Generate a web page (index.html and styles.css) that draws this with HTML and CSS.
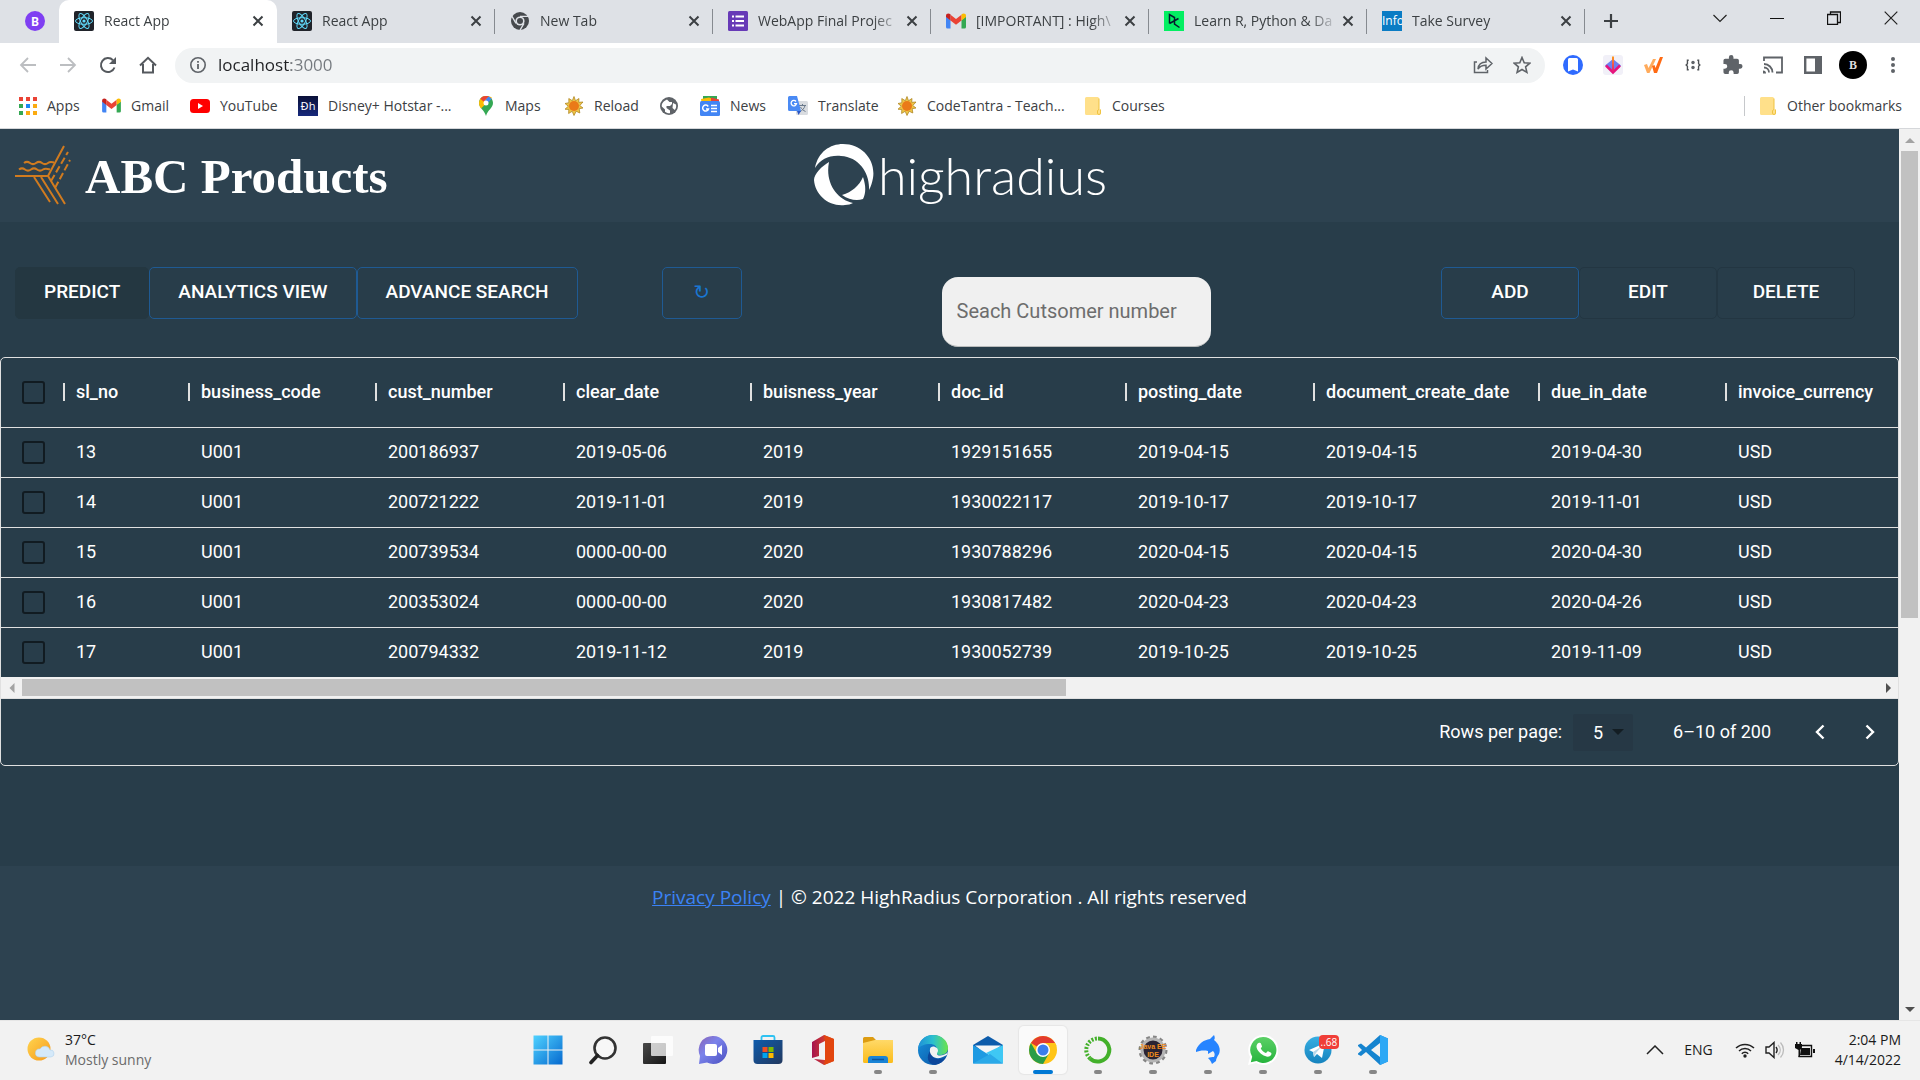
FILE: index.html
```html
<!DOCTYPE html>
<html lang="en">
<head>
<meta charset="utf-8">
<title>React App</title>
<link rel="stylesheet" href="styles.css">
</head>
<body>
<svg class="defs" width="0" height="0" aria-hidden="true">
  <defs>
    <linearGradient id="win" x1="0" y1="0" x2="1" y2="1"><stop offset="0" stop-color="#4fd2ff"/><stop offset="1" stop-color="#0669cf"/></linearGradient>
    <linearGradient id="chat" x1="0" y1="0" x2="1" y2="1"><stop offset="0" stop-color="#8a62b5"/><stop offset=".4" stop-color="#7b83eb"/><stop offset="1" stop-color="#4a4fc0"/></linearGradient>
    <linearGradient id="store" x1="0" y1="0" x2="1" y2="1"><stop offset="0" stop-color="#0f5cad"/><stop offset="1" stop-color="#22385e"/></linearGradient>
    <linearGradient id="folder" x1="0" y1="0" x2="0" y2="1"><stop offset="0" stop-color="#ffd968"/><stop offset="1" stop-color="#fbbc1b"/></linearGradient>
    <linearGradient id="edgeTop" x1="0" y1="0" x2="1" y2="0"><stop offset="0" stop-color="#1f8fd8"/><stop offset=".5" stop-color="#2bc0cf"/><stop offset="1" stop-color="#6be44a"/></linearGradient>
    <linearGradient id="edgeBot" x1="0" y1="0" x2="1" y2="1"><stop offset="0" stop-color="#1793dd"/><stop offset="1" stop-color="#0b4fa0"/></linearGradient>
    <linearGradient id="office" x1="0" y1="0" x2="1" y2="0"><stop offset="0" stop-color="#a5134f"/><stop offset="1" stop-color="#ef5a1a"/></linearGradient>
    <linearGradient id="sun" x1="0" y1="0" x2="1" y2="1"><stop offset="0" stop-color="#ffd44f"/><stop offset="1" stop-color="#f79a1b"/></linearGradient>
    <linearGradient id="tele" x1="0" y1="0" x2="0" y2="1"><stop offset="0" stop-color="#37aee2"/><stop offset="1" stop-color="#1683be"/></linearGradient>
    <linearGradient id="wa" x1="0" y1="0" x2="0" y2="1"><stop offset="0" stop-color="#5bd066"/><stop offset="1" stop-color="#27b43e"/></linearGradient>
    <linearGradient id="task" x1="0" y1="0" x2="1" y2="1"><stop offset="0" stop-color="#4a4a4a"/><stop offset="1" stop-color="#161616"/></linearGradient>
    <linearGradient id="arrowDown" x1="0" y1="0" x2="0" y2="1"><stop offset="0" stop-color="#ff9b1a"/><stop offset="1" stop-color="#e6137e"/></linearGradient>
    <symbol id="i-close" viewBox="0 0 12 12"><path d="M1.500 1.500l9 9M10.500 1.500l-9 9" stroke="#3c4043" stroke-width="2"/></symbol>
    <symbol id="i-react" viewBox="0 0 20 20"><rect width="20" height="20" rx="2" fill="#20232a"/><g fill="none" stroke="#61dafb"><ellipse cx="10" cy="10" rx="8.500" ry="3.300"/><ellipse cx="10" cy="10" rx="8.500" ry="3.300" transform="rotate(60 10 10)"/><ellipse cx="10" cy="10" rx="8.500" ry="3.300" transform="rotate(120 10 10)"/></g><circle cx="10" cy="10" r="1.600" fill="#61dafb"/></symbol>
    <symbol id="i-gmail" viewBox="0 0 20 16"><path d="M0 2v12a1.500 1.500 0 0 0 1.500 1.500H4.500V7L0 3.500z" fill="#4285f4"/><path d="M20 2v12a1.500 1.500 0 0 1-1.500 1.500H15.500V7L20 3.500z" fill="#34a853"/><path d="M4.500 1.800L10 6l5.500-4.200V7.500L10 11.800 4.500 7.500z" fill="#ea4335"/><path d="M0 2.800C0 .6 2.300-.3 4.500 1.300V7.500L0 4z" fill="#c5221f"/><path d="M20 2.800c0-2.200-2.300-3.100-4.500-1.500V7.500L20 4z" fill="#fbbc04"/></symbol>
    <symbol id="i-sunny" viewBox="0 0 20 20"><path d="M10 .5l1.500 4.200L15 2.500l-.3 3.800 4.300-.3-3.200 3.500L19 12l-3.800.7.600 4.300-3.600-1.700L10 19.500l-1.800-4.200L4.600 17.500l.2-4L1 13.200l3.300-3L1 7.500l3.900-.8L4.800 2.500l3.500 2.200z" fill="#edc548" stroke="#a87c16" stroke-width=".7"/><circle cx="10" cy="10" r="5" fill="#ea7a18"/></symbol>
    <symbol id="i-folder" viewBox="0 0 16 18"><path d="M1.500 0h11A1.500 1.500 0 0 1 14 1.500V12l2 1v3a2 2 0 0 1-2 2H1.500A1.500 1.500 0 0 1 0 16.500v-15A1.500 1.500 0 0 1 1.500 0z" fill="#ffe08a"/><path d="M15.500 12.500v3.500a1.500 1.500 0 0 1-3 0v-2.500l1.500-1V1.500" fill="none" stroke="#efc341"/></symbol>
  </defs>
</svg>

<div class="tabs">
  <div class="pinned"><svg width="20" height="20" viewBox="0 0 20 20"><circle cx="10" cy="10" r="10" fill="#7f3ff2"/><text x="10" y="14.500" text-anchor="middle" class="pin-letter">B</text></svg></div>
  <div class="tab active"><svg width="20" height="20"><use href="#i-react"/></svg><span class="tab-title">React App</span><button class="tab-close" aria-label="Close tab"><svg width="12" height="12"><use href="#i-close"/></svg></button></div>
  <div class="tab"><svg width="20" height="20"><use href="#i-react"/></svg><span class="tab-title">React App</span><button class="tab-close" aria-label="Close tab"><svg width="12" height="12"><use href="#i-close"/></svg></button></div>
  <div class="tab"><svg width="20" height="20" viewBox="0 0 20 20"><circle cx="10" cy="10" r="9" fill="#46494d"/><circle cx="10" cy="10" r="4.600" fill="#dee1e6"/><circle cx="10" cy="10" r="3" fill="#46494d"/><path d="M10 5.400h8M6 12.300L2 5.400M14 12.300L10 19.200" stroke="#dee1e6" stroke-width="1.300"/></svg><span class="tab-title">New Tab</span><button class="tab-close" aria-label="Close tab"><svg width="12" height="12"><use href="#i-close"/></svg></button></div>
  <div class="tab"><svg width="20" height="20" viewBox="0 0 20 20"><rect width="20" height="20" rx="1.500" fill="#673ab7"/><path d="M4 5.500h2M4 10h2M4 14.500h2M7.500 5.500H16M7.500 10H16M7.500 14.500H16" stroke="#fff" stroke-width="2"/></svg><span class="tab-title">WebApp Final Projec</span><button class="tab-close" aria-label="Close tab"><svg width="12" height="12"><use href="#i-close"/></svg></button></div>
  <div class="tab"><svg width="20" height="16"><use href="#i-gmail"/></svg><span class="tab-title">[IMPORTANT] : High\</span><button class="tab-close" aria-label="Close tab"><svg width="12" height="12"><use href="#i-close"/></svg></button></div>
  <div class="tab"><svg width="20" height="20" viewBox="0 0 20 20"><rect width="20" height="20" fill="#03ef62"/><path d="M5.500 12.500V3.500l5 3v6.500l5 3.500M14.500 7.500l-9 5" fill="none" stroke="#05192d" stroke-width="1.500"/></svg><span class="tab-title">Learn R, Python &amp; Da</span><button class="tab-close" aria-label="Close tab"><svg width="12" height="12"><use href="#i-close"/></svg></button></div>
  <div class="tab"><span class="info-icon">Info</span><span class="tab-title">Take Survey</span><button class="tab-close" aria-label="Close tab"><svg width="12" height="12"><use href="#i-close"/></svg></button></div>
  <button class="new-tab" aria-label="New tab"><svg width="16" height="16" viewBox="0 0 16 16"><path d="M8 1v14M1 8h14" stroke="#3c4043" stroke-width="2.200"/></svg></button>
  <div class="window-controls">
    <button aria-label="Search tabs"><svg width="14" height="14" viewBox="0 0 14 14"><path d="M.5 4l6.500 6.500L13.500 4" fill="none" stroke="#222" stroke-width="1.200"/></svg></button>
    <button aria-label="Minimize"><svg width="14" height="14" viewBox="0 0 14 14"><path d="M0 7.500h14" stroke="#111"/></svg></button>
    <button aria-label="Restore"><svg width="14" height="14" viewBox="0 0 14 14"><path d="M.5 3.500h10v10H.5zM3.500 3V1h10v10.500h-2.500" fill="none" stroke="#111" stroke-width="1.300"/></svg></button>
    <button aria-label="Close window"><svg width="14" height="14" viewBox="0 0 14 14"><path d="M.7.7l12.600 12.600M13.300.7L.7 13.300" stroke="#222" stroke-width="1.200"/></svg></button>
  </div>
</div>

<div class="toolbar">
  <div class="nav">
    <button aria-label="Back"><svg width="18" height="18" viewBox="0 0 18 18"><path d="M17 9H2M9 2L2 9l7 7" fill="none" stroke="#bcbec1" stroke-width="1.800"/></svg></button>
    <button aria-label="Forward"><svg width="18" height="18" viewBox="0 0 18 18"><path d="M1 9h15M9 2l7 7-7 7" fill="none" stroke="#bcbec1" stroke-width="1.800"/></svg></button>
    <button aria-label="Reload"><svg width="18" height="18" viewBox="0 0 18 18"><path d="M15.500 11.500A7 7 0 1 1 14 4.200" fill="none" stroke="#55595e" stroke-width="2"/><path d="M17 1v7h-7z" fill="#55595e"/></svg></button>
    <button aria-label="Home"><svg width="18" height="18" viewBox="0 0 18 18"><path d="M1 9.500L9 1.800l8 7.700M4 8v8.500h10V8" fill="none" stroke="#55595e" stroke-width="2"/></svg></button>
  </div>
  <div class="omnibox">
    <svg width="16" height="16" viewBox="0 0 16 16"><circle cx="8" cy="8" r="7.200" fill="none" stroke="#5f6368" stroke-width="1.600"/><path d="M8 7v5M8 4v1.800" stroke="#5f6368" stroke-width="1.800"/></svg>
    <input class="url" type="text" value="localhost:3000" aria-label="Address">
    <button aria-label="Share"><svg width="20" height="20" viewBox="0 0 20 20"><path d="M4 7H1.500v10.500h13V15M5 14c.5-5 3.500-7 8-7V3l6 5.500-6 5.500v-3.800c-4 0-6 .8-8 3.800z" fill="none" stroke="#5f6368" stroke-width="1.500"/></svg></button>
    <button aria-label="Bookmark"><svg width="18" height="18" viewBox="0 0 18 18"><path d="M9 1.500l2.200 5.200 5.600.5-4.200 3.700 1.300 5.500L9 13.500l-4.900 2.900 1.300-5.500L1.200 7.200l5.600-.5z" fill="none" stroke="#5f6368" stroke-width="1.600"/></svg></button>
  </div>
  <div class="extensions">
    <button aria-label="Extension"><svg width="20" height="20" viewBox="0 0 20 20"><circle cx="10" cy="10" r="10" fill="#2f6bff"/><path d="M5 4.500A1.500 1.500 0 0 1 6.500 3h7A1.500 1.500 0 0 1 15 4.500V16.500l-5-2-5 2z" fill="#fff"/></svg></button>
    <button aria-label="Downloader"><svg width="20" height="20" viewBox="0 0 20 20"><rect width="20" height="20" rx="3" fill="#f1f0f8"/><path d="M10 4L2 10.500l8 8 8-8z" fill="#6f80ef"/><path d="M3 10.500l7 7 7-7" fill="none" stroke="#e6137e" stroke-width="2.500"/><path d="M9 1.500h2V17H9z" fill="url(#arrowDown)"/></svg></button>
    <button aria-label="Checker"><svg width="20" height="18" viewBox="0 0 20 18"><path d="M1 9l3-1 1.500 4L10 3h3L6.500 17H4z" fill="#ffab5c"/><path d="M9 10l2.500-1 1 3L17 1h3l-6 16h-3z" fill="#ff6a13"/></svg></button>
    <button aria-label="JSON viewer"><svg width="18" height="12" viewBox="0 0 18 14"><path d="M4 1.500H2.500v4L1 7l1.500 1.500v4H4M14 1.500h1.500v4L17 7l-1.500 1.500v4H14" fill="none" stroke="#4d5154" stroke-width="1.600"/><circle cx="9" cy="4" r="2" fill="#5f6368"/><circle cx="9" cy="10" r="2" fill="#5f6368"/></svg></button>
    <button aria-label="Extensions"><svg width="20" height="20" viewBox="0 0 22 22"><path d="M19 10h-1.500V6a2 2 0 0 0-2-2h-4V2.500a2.500 2.500 0 0 0-5 0V4h-4A2 2 0 0 0 .5 6v3.800H2a2.700 2.700 0 0 1 0 5.400H.5V19a2 2 0 0 0 2 2h3.800v-1.500a2.700 2.700 0 0 1 5.400 0V21h3.800a2 2 0 0 0 2-2v-4H19a2.500 2.500 0 0 0 0-5z" fill="#5f6368"/></svg></button>
    <button aria-label="Cast"><svg width="20" height="18" viewBox="0 0 20 18"><path d="M1 5V1.500h18v15h-6M1 8a8.500 8.500 0 0 1 8.500 8.500M1 11.500a5 5 0 0 1 5 5" fill="none" stroke="#5f6368" stroke-width="1.800"/><path d="M0 14.500a3 3 0 0 1 3 3H0z" fill="#5f6368"/></svg></button>
    <button aria-label="Side panel"><svg width="18" height="18" viewBox="0 0 18 18"><path d="M1.200 1.200h15.600v15.600H1.200z" fill="none" stroke="#5f6368" stroke-width="2.400"/><path d="M11 1h6v16h-6z" fill="#5f6368"/></svg></button>
    <button class="avatar" aria-label="Profile">B</button>
    <button aria-label="Menu"><svg width="4" height="16" viewBox="0 0 4 16"><g fill="#5f6368"><circle cx="2" cy="2" r="2"/><circle cx="2" cy="8" r="2"/><circle cx="2" cy="14" r="2"/></g></svg></button>
  </div>
</div>

<nav class="bookmarks">
  <a href="#"><svg width="18" height="18" viewBox="0 0 18 18"><path d="M0 0h4v4H0zM7 0h4v4H7zM14 0h4v4h-4z" fill="#ea4335"/><path d="M0 7h4v4H0zM0 14h4v4H0z" fill="#34a853"/><path d="M7 7h4v4H7z" fill="#1a87f4"/><path d="M14 7h4v4h-4zM14 14h4v4h-4zM7 14h4v4H7z" fill="#fbab10"/></svg><span>Apps</span></a>
  <a href="#"><svg width="19" height="15"><use href="#i-gmail"/></svg><span>Gmail</span></a>
  <a href="#"><svg width="20" height="14" viewBox="0 0 20 14"><rect width="20" height="14" rx="3.500" fill="#f00"/><path d="M8 4l5 3-5 3z" fill="#fff"/></svg><span>YouTube</span></a>
  <a href="#"><span class="hotstar">Ɖh</span><span>Disney+ Hotstar -...</span></a>
  <a href="#"><svg width="18" height="20" viewBox="0 0 16 20"><path d="M8 0C3.500 0 1 3.400 1 7c0 5 5.500 7 7 13C9.500 14 15 12 15 7c0-3.600-2.500-7-7-7z" fill="#34a853"/><path d="M3 12.500L14 1.800C12.500.6 10.500 0 8 0 4 0 1 3.400 1 7c0 2.200.9 4 2 5.500z" fill="#fbbc04"/><path d="M2.300 2.800L5.500 5.500 11 .5C6.500-.8 3.700.8 2.300 2.800z" fill="#ea4335"/><path d="M10.500.4L6 5.500 9 8l4.600-5.300C12.800 1.600 11.700.8 10.500.4z" fill="#4285f4"/><circle cx="8" cy="7" r="2.500" fill="#fff"/></svg><span>Maps</span></a>
  <a href="#"><svg width="20" height="20"><use href="#i-sunny"/></svg><span>Reload</span></a>
  <a href="#" aria-label="Website"><svg width="18" height="18" viewBox="0 0 18 18"><circle cx="9" cy="9" r="9" fill="#5f6368"/><path d="M7 2.500C3 4 1.500 7 1.800 9.500L5 12.500v2.300c1 1 3 1.700 5 1.500v-2.800L6.500 11V9H10l2-2V5H9.500zM13 6l3 1.500c.5 2 0 4-1.200 5.500L12.500 11z" fill="#fff"/></svg></a>
  <a href="#"><svg width="20" height="20" viewBox="0 0 20 20"><path d="M3 0h14v6H3z" fill="#34a853"/><path d="M1 3l8-1.500L18 5v4H2z" fill="#fbbc04"/><path d="M11 1.500l8 2V9h-8z" fill="#ea4335"/><rect y="5" width="20" height="15" rx="1.500" fill="#4285f4"/><path d="M8.200 10.500A3 3 0 1 0 8.500 13H6M11 9.500h6M11 12.500h6M11 15.500h6" fill="none" stroke="#fff" stroke-width="1.500"/></svg><span>News</span></a>
  <a href="#"><svg width="20" height="20" viewBox="0 0 20 20"><rect x="8" y="5" width="12" height="14" rx="1.500" fill="#d9dce0"/><path d="M11 9.500h7M14.500 8v1.500M17 9.500c-.5 3-3 5-5 6M12.500 11c1 2 3 3.500 5 4.500" fill="none" stroke="#6b7a8c"/><path d="M1.500 0H9l4 15H1.500A1.500 1.500 0 0 1 0 13.500v-12A1.500 1.500 0 0 1 1.500 0z" fill="#4a8af4"/><path d="M9 15h4l-2.500 4z" fill="#2a56c6"/><path d="M8 5.500A2.700 2.700 0 1 0 8.500 7.700H6" fill="none" stroke="#fff" stroke-width="1.300"/></svg><span>Translate</span></a>
  <a href="#"><svg width="20" height="20"><use href="#i-sunny"/></svg><span>CodeTantra - Teach...</span></a>
  <a href="#"><svg width="18" height="18"><use href="#i-folder"/></svg><span>Courses</span></a>
  <a class="other" href="#"><svg width="18" height="18"><use href="#i-folder"/></svg><span>Other bookmarks</span></a>
</nav>

<div class="viewport">
  <div class="page">
    <header class="header">
      <div class="brand">
        <svg width="56" height="60" viewBox="0 0 56 60"><g fill="none" stroke="#d17b1f" stroke-width="2"><path d="M0 31h33L49 1"/><path d="M4 24.500c2-1.500 4-1.500 6 0s4 1.500 6 0 4-1.500 6 0 4 1.500 6 0 4-1 7 0M9 18c2-1.500 4-1.500 6 0s4 1.500 6 0 4-1.500 6 0 4 1.500 6 0 3-1 6-.5"/><path d="M36 36L53 7M40 43L55 15" stroke-dasharray="7 3"/><path d="M19 32l16 25M26 32l17 27M33 31l17 28"/></g></svg>
        <h1>ABC Products</h1>
      </div>
      <div class="logo">
        <svg width="60" height="62" viewBox="0 0 60 62"><path d="M1 24C4 8 16 0 29 0c19 0 33 16 30 34-1 5-2 8-4 12 1-17-10-33-28-34C15 11 7 15 1 24z" fill="#fff"/><path d="M15 18C8 22 0 30 0 36c1 15 15 27 31 25 3 0 6-1 8-2C22 55 11 38 15 18z" fill="#fff"/><path d="M49 33c3 9 3 16 0 22-6 2-14 1-21-4 10-3 17-9 21-18z" fill="#fff"/></svg>
        <span>highradius</span>
      </div>
    </header>

    <main class="main">
      <div class="actions">
        <div class="group">
          <button class="btn filled">PREDICT</button>
          <button class="btn">ANALYTICS VIEW</button>
          <button class="btn">ADVANCE SEARCH</button>
        </div>
        <button class="btn refresh">↻</button>
        <input class="search" type="text" placeholder="Seach Cutsomer number" aria-label="Customer number">
        <div class="group equal">
          <button class="btn">ADD</button>
          <button class="btn muted">EDIT</button>
          <button class="btn muted">DELETE</button>
        </div>
      </div>

      <section class="grid">
        <table>
          <colgroup><col class="c-check"><col class="c-no"><col class="c-odd"><col class="c-even"><col class="c-odd"><col class="c-even"><col class="c-odd"><col class="c-even"><col class="c-wide"><col class="c-odd"><col></colgroup>
          <thead><tr><th><input type="checkbox" aria-label="Select all"></th><th><span>sl_no</span></th><th><span>business_code</span></th><th><span>cust_number</span></th><th><span>clear_date</span></th><th><span>buisness_year</span></th><th><span>doc_id</span></th><th><span>posting_date</span></th><th><span>document_create_date</span></th><th><span>due_in_date</span></th><th><span>invoice_currency</span></th></tr></thead>
          <tbody>
            <tr><td><input type="checkbox" aria-label="Select 13"></td><td>13</td><td>U001</td><td>200186937</td><td>2019-05-06</td><td>2019</td><td>1929151655</td><td>2019-04-15</td><td>2019-04-15</td><td>2019-04-30</td><td>USD</td></tr>
            <tr><td><input type="checkbox" aria-label="Select 14"></td><td>14</td><td>U001</td><td>200721222</td><td>2019-11-01</td><td>2019</td><td>1930022117</td><td>2019-10-17</td><td>2019-10-17</td><td>2019-11-01</td><td>USD</td></tr>
            <tr><td><input type="checkbox" aria-label="Select 15"></td><td>15</td><td>U001</td><td>200739534</td><td>0000-00-00</td><td>2020</td><td>1930788296</td><td>2020-04-15</td><td>2020-04-15</td><td>2020-04-30</td><td>USD</td></tr>
            <tr><td><input type="checkbox" aria-label="Select 16"></td><td>16</td><td>U001</td><td>200353024</td><td>0000-00-00</td><td>2020</td><td>1930817482</td><td>2020-04-23</td><td>2020-04-23</td><td>2020-04-26</td><td>USD</td></tr>
            <tr><td><input type="checkbox" aria-label="Select 17"></td><td>17</td><td>U001</td><td>200794332</td><td>2019-11-12</td><td>2019</td><td>1930052739</td><td>2019-10-25</td><td>2019-10-25</td><td>2019-11-09</td><td>USD</td></tr>
          </tbody>
        </table>
        <div class="hscroll">
          <svg width="21" height="12" viewBox="0 0 20 12"><path d="M13 1v10L8 6z" fill="#a3a3a3"/></svg>
          <div class="hthumb"></div>
          <div class="hrest"></div>
          <svg width="20" height="12" viewBox="0 0 20 12"><path d="M8 1v10l5-5z" fill="#505050"/></svg>
        </div>
        <div class="pager">
          <label for="rows">Rows per page:</label>
          <div class="select-wrap">
            <select id="rows"><option>5</option><option>10</option></select>
            <svg width="12" height="6" viewBox="0 0 12 6"><path d="M0 0h12L6 6z" fill="#131d23"/></svg>
          </div>
          <span class="range">6–10 of 200</span>
          <button aria-label="Previous page"><svg width="10" height="16" viewBox="0 0 10 16"><path d="M8.500 1.500L2 8l6.500 6.500" fill="none" stroke="#fff" stroke-width="2.400"/></svg></button>
          <button aria-label="Next page"><svg width="10" height="16" viewBox="0 0 10 16"><path d="M1.500 1.500L8 8l-6.500 6.500" fill="none" stroke="#fff" stroke-width="2.400"/></svg></button>
        </div>
      </section>
    </main>

    <footer class="footer"><a href="#">Privacy Policy</a> | © 2022 HighRadius Corporation . All rights reserved</footer>
  </div>
  <div class="vscroll">
    <svg width="12" height="20" viewBox="0 0 12 20"><path d="M1 14h10L6 9z" fill="#a3a3a3"/></svg>
    <div class="vtrack"><div class="vthumb"></div></div>
    <svg width="12" height="20" viewBox="0 0 12 20"><path d="M1 7h10l-5 5z" fill="#505050"/></svg>
  </div>
</div>

<div class="taskbar">
  <div class="weather">
    <svg width="28" height="26" viewBox="0 0 28 26"><circle cx="12" cy="12" r="11.500" fill="url(#sun)"/><path d="M12 20a4 4 0 0 1 1-8 5.500 5.500 0 0 1 10 1 3.500 3.500 0 0 1 1 7z" fill="#d5e9f9" stroke="#b4d3ec" stroke-width=".6"/></svg>
    <div><div>37°C</div><div class="dim">Mostly sunny</div></div>
  </div>
  <div class="apps">
    <button aria-label="Start"><svg width="30" height="30" viewBox="0 0 30 30"><path d="M.5.500h14v14H.5zM15.500.5h14v14h-14zM.5 15.500h14v14H.5zM15.500 15.500h14v14h-14z" fill="url(#win)"/></svg></button>
    <button aria-label="Search"><svg width="30" height="30" viewBox="0 0 30 30"><circle cx="17" cy="13" r="10.500" fill="#f7f7f7" stroke="#333" stroke-width="2.600"/><path d="M9.500 20.500L3 27.500" stroke="#222" stroke-width="3.600" stroke-linecap="round"/></svg></button>
    <button aria-label="Task view"><svg width="30" height="30" viewBox="0 0 30 30"><rect y="8" width="23" height="21" rx="1" fill="url(#task)"/><rect x="8" y="1" width="22" height="20" rx="1" fill="#fff" opacity=".75"/></svg></button>
    <button aria-label="Chat"><svg width="30" height="30" viewBox="0 0 30 30"><path d="M15 1a14 14 0 1 1-6 26.500L1 29l1-8A14 14 0 0 1 15 1z" fill="url(#chat)"/><rect x="7" y="9" width="12" height="12" rx="2" fill="#fff"/><path d="M20 13l4-3v10l-4-3z" fill="#fff"/></svg></button>
    <button aria-label="Store"><svg width="30" height="30" viewBox="0 0 30 30"><path d="M8.500 6V2.500A1.500 1.500 0 0 1 10 1h10a1.500 1.500 0 0 1 1.500 1.500V6" fill="none" stroke="#2ec2f2" stroke-width="1.800"/><path d="M.5 5h29v20a4 4 0 0 1-4 4h-21a4 4 0 0 1-4-4z" fill="url(#store)"/><path d="M9.500 12h5v5h-5z" fill="#f25022"/><path d="M15.500 12h5v5h-5z" fill="#7fba00"/><path d="M9.500 18h5v5h-5z" fill="#00a4ef"/><path d="M15.500 18h5v5h-5z" fill="#ffb900"/></svg></button>
    <button aria-label="Office"><svg width="30" height="30" viewBox="0 0 30 30"><path d="M16 0l10 4v22l-10 4-10-6 11 1V6l-6 3v12l-7 2V7z" fill="url(#office)"/><path d="M16 0l10 4v22l-10 4 1-5V6z" fill="#e2460f"/></svg></button>
    <button class="running" aria-label="Files"><svg width="30" height="30" viewBox="0 0 30 30"><path d="M0 3.500A1.500 1.500 0 0 1 1.500 2H10l3 3H30v5H0z" fill="#dd9c12"/><path d="M0 8l12-3h18v21.500A1.500 1.500 0 0 1 28.500 28h-27A1.500 1.500 0 0 1 0 26.500z" fill="url(#folder)"/><path d="M5 28v-4a3 3 0 0 1 3-3h14a3 3 0 0 1 3 3v4z" fill="#1a84d6"/><path d="M9 24.500h12" stroke="#0d559c" stroke-width="1.500"/></svg></button>
    <button class="running" aria-label="Edge"><svg width="30" height="30" viewBox="0 0 30 30"><circle cx="15" cy="15" r="15" fill="url(#edgeBot)"/><path d="M0 14C1 5 7 0 15 0c9 0 15 6 15 13 0 5-4 7-8 7-5 0-4-3-3-5 0-4-3-6-7-6-6 0-10 2-12 5z" fill="url(#edgeTop)"/><path d="M13 15c-1 5 3 10 9 9 3 0 5-1 6-2-2 4-6 7-11 8C10 29 7 22 13 15z" fill="#0c479b"/><path d="M12 14c-1 6 4 10 10 9 3-1 5-2 7-3l1-3c-3 4-12 5-11 1 2-2 1-5-2-6-2-1-5 0-5 2z" fill="#f2f2f2"/></svg></button>
    <button aria-label="Mail"><svg width="30" height="28" viewBox="0 0 30 28"><path d="M0 9L15 0l15 9v5H0z" fill="#0d5cab"/><path d="M2 9.500h26L15 20z" fill="#f5f6f7"/><path d="M0 9l30 18.500H0z" fill="#1e9ae2"/><path d="M30 9v18.500L13 17z" fill="#3fc8f4"/><path d="M0 27.500L17 18l13 9.500z" fill="#2aa9e8"/></svg></button>
    <button class="current" aria-label="Chrome"><svg width="30" height="30" viewBox="0 0 30 30"><circle cx="15" cy="15" r="14" fill="#ffc517"/><path d="M15 15L2.900 8A14 14 0 0 1 27.100 8z" fill="#e33b2e"/><path d="M27.100 8H15v3h13.400z" fill="#ffc517"/><path d="M2.900 8A14 14 0 0 0 15 29l6-10.500H9z" fill="#2a9d48"/><circle cx="15" cy="15" r="7" fill="#fff"/><circle cx="15" cy="15" r="5.500" fill="#3b7ded"/></svg></button>
    <button class="running" aria-label="Anaconda"><svg width="30" height="30" viewBox="0 0 30 30"><path d="M15 3.500a11.500 11.500 0 1 1-8 20" fill="none" stroke="#43b02a" stroke-width="4"/><path d="M7 23.500a11.500 11.500 0 0 1 8-20" fill="none" stroke="#43b02a" stroke-width="4" stroke-dasharray="2 1.500"/></svg></button>
    <button class="running" aria-label="Java EE IDE"><svg width="32" height="30" viewBox="0 0 32 30"><circle cx="16" cy="15" r="12.500" fill="none" stroke="#858585" stroke-width="4" stroke-dasharray="3.500 3"/><circle cx="16" cy="15" r="11" fill="#2a2333" stroke="#b5b5b5" stroke-width="3"/><text class="java" x="16" y="14" text-anchor="middle">Java EE</text><text class="java" x="16" y="22" text-anchor="middle">IDE</text></svg></button>
    <button class="running" aria-label="Dolphin"><svg width="30" height="30" viewBox="0 0 30 30"><path d="M3 15C6 8 11 5 17 4l4-4c1 2 1 4 0 5 5 4 7 9 5 14-2 3-3 5-3 7l-4 3c-1-3-3-5-4-6 2-1 4-1 6-1 1-2 1-4-1-6l-5 3v-3c-5-1-9 0-12 1z" fill="#2684ff"/></svg></button>
    <button class="running" aria-label="WhatsApp"><svg width="30" height="30" viewBox="0 0 30 30"><path d="M15 0a15 15 0 1 1-7 28L0 30l2-8A15 15 0 0 1 15 0z" fill="#fff"/><path d="M15 2a13 13 0 1 1-6.500 24L2.800 27.300l1.400-5.500A13 13 0 0 1 15 2z" fill="url(#wa)"/><path d="M10.500 8c1-.6 2-.4 2.300.3l1.200 2.900c.2.800-1.500 1.800-1.200 2.400 1.100 2.200 2.900 3.600 5 4.400.7.200 1.500-2 2.300-1.700l3 1.500c.8.800.1 2.400-1 3.200-2 1.200-4.800.7-8-1.500-3-2.100-5.600-5.300-5.600-8 0-1.600.8-2.800 2-3.500z" fill="#fff"/></svg></button>
    <button class="running" aria-label="Telegram"><svg width="30" height="30" viewBox="0 0 30 30"><circle cx="15" cy="15" r="13.500" fill="url(#tele)"/><path d="M6 15l16-7-3 15-5-4-3 3-1-5z" fill="#fff"/><path d="M10 17l9-6-6 7-2 4z" fill="#b9d8ea"/></svg><span class="badge">..68</span></button>
    <button class="running" aria-label="VS Code"><svg width="30" height="30" viewBox="0 0 30 30"><path d="M22 0l8 3.500v23L22 30 8 17l-5 4-3-1.500v-1L4 15 0 11v-1l3-1.500 5 4zM22 8l-9 7 9 7z" fill="#1684cf" fill-rule="evenodd"/><path d="M22 0l8 3.500v23L22 30z" fill="#2ea8f5"/></svg></button>
  </div>
  <div class="tray">
    <svg width="18" height="10" viewBox="0 0 18 10"><path d="M1 9l8-8 8 8" fill="none" stroke="#222" stroke-width="1.500"/></svg>
    <span class="lang">ENG</span>
    <svg width="20" height="16" viewBox="0 0 20 16"><g fill="none" stroke="#222" stroke-width="1.500"><path d="M1 6a13 13 0 0 1 18 0M4 9a8.500 8.500 0 0 1 12 0M6.800 11.700a4.500 4.500 0 0 1 6.400 0"/></g><circle cx="10" cy="14" r="1.700" fill="#222"/></svg>
    <svg width="20" height="18" viewBox="0 0 20 18"><path d="M1 6h3l5-4.500v15L4 12H1zM11 6c1.500 2 1.500 4 0 6" fill="none" stroke="#222" stroke-width="1.400"/><path d="M13 4c3 3 3 7 0 10M15.500 1.500c4 4.500 4 10.500 0 15" fill="none" stroke="#bbb" stroke-width="1.300"/></svg>
    <svg width="20" height="16" viewBox="0 0 20 16"><path d="M7 3.500h9.500v11H3.500" fill="none" stroke="#111" stroke-width="1.400"/><path d="M6 6h9v7H5zM18 7h2v4h-2zM0 2h7v3.500L5 8v7H3.500V8L0 6zM1 0h1.500v3H1zM4.500 0H6v3H4.500z" fill="#111"/></svg>
    <div class="clock"><div>2:04 PM</div><div>4/14/2022</div></div>
  </div>
</div>
</body>
</html>
```
FILE: styles.css
```css
* { box-sizing: border-box; }
body { margin: 0; min-height: 100vh; display: flex; flex-direction: column; background: #fff; color: #3c4043; font: 14px/20px "Open Sans", "Noto Sans", sans-serif; }
button { border: 0; padding: 0; background: none; font: inherit; color: inherit; display: flex; align-items: center; justify-content: center; }
svg { display: block; flex: none; }
.defs { position: absolute; }
a { color: inherit; text-decoration: none; }

/* Tab strip */
.tabs { display: flex; height: 43px; padding-bottom: 1px; background: #dee1e6; }
.pinned { flex: none; width: 59px; display: flex; align-items: center; padding-left: 25px; }
.pin-letter { font: 700 12px Roboto, sans-serif; fill: #fff; }
.tab { flex: 0 1 218px; min-width: 0; height: 43px; display: flex; align-items: center; padding: 0 13px 1px 15px; position: relative; }
.tab + .tab:not(.active)::after { content: ""; position: absolute; right: 0; top: 9px; width: 1px; height: 25px; background: #868a90; }
.tab.active { background: #fff; border-radius: 10px 10px 0 0; }
.tab-title { flex: 1; min-width: 0; margin: 0 4px 0 10px; overflow: hidden; white-space: nowrap; -webkit-mask-image: linear-gradient(to right, #000 115px, transparent 145px); mask-image: linear-gradient(to right, #000 115px, transparent 145px); }
.info-icon { width: 20px; height: 20px; overflow: hidden; background: #0a7cc4; color: #fff; font-size: 12px; line-height: 20px; }
.new-tab { width: 52px; }
.window-controls { margin-left: auto; display: flex; align-items: flex-start; padding-right: 1px; }
.window-controls button { width: 57px; height: 36px; }

/* Address row */
.toolbar { display: flex; align-items: center; height: 44px; padding: 0 7px 0 8px; }
.nav { display: flex; width: 167px; flex: none; }
.nav button { width: 40px; height: 34px; }
.omnibox { flex: 1; display: flex; align-items: center; height: 35px; padding: 0 4px 0 15px; border-radius: 18px; background: #f1f3f4; }
.omnibox button { width: 39px; height: 34px; }
.url { flex: 1; border: 0; outline: 0; margin-left: 12px; padding: 0; font: 17px/24px "Open Sans", sans-serif; color: transparent; background: linear-gradient(to right, #202124 73px, #74797e 73px); -webkit-background-clip: text; background-clip: text; }
.extensions { display: flex; align-items: center; padding-left: 8px; }
.extensions button { width: 40px; height: 34px; }
.extensions .avatar { width: 28px; height: 28px; margin: 0 6px; border-radius: 50%; background: #000; color: #ddd; font: 700 12px "Liberation Serif", serif; }

/* Bookmarks */
.bookmarks { display: grid; grid-template-columns: 83px 88px 108px 179px 87px 96px 40px 88px 109px 187px auto 1fr; align-items: center; height: 42px; padding: 0 18px 4px 19px; border-bottom: 1px solid #d5d7da; }
.bookmarks a { display: flex; align-items: center; gap: 10px; white-space: nowrap; }
.other { justify-self: end; padding-left: 14px; border-left: 1px solid #c6c8cb; }
.hotstar { width: 20px; height: 20px; background: linear-gradient(#0a1038, #17297c); color: #fff; font-size: 11px; text-align: center; }

/* Page */
.viewport { flex: 1; display: flex; }
.page { flex: 1; min-width: 0; display: flex; flex-direction: column; background: #283d4a; color: #fff; font-family: Roboto, sans-serif; }
.header { display: grid; grid-template-columns: 1fr auto 1fr; align-items: center; height: 93px; padding: 0 15px 2px; background: #2d4250; }
.brand { display: flex; align-items: center; gap: 14px; }
.brand h1 { margin: 0; padding-top: 4px; font: 700 49px/56px "Liberation Serif", serif; }
.logo { display: flex; align-items: center; gap: 4px; padding-left: 22px; }
.logo span { font: 300 52px/60px Lato, sans-serif; }
.main { padding: 45px 0 100px; }
.actions { display: flex; align-items: flex-start; padding: 0 44px 0 15px; }
.group { display: flex; }
.btn { height: 52px; padding: 0 28px 2px; border: 1px solid #1f5a93; border-radius: 5px; font-size: 19px; font-weight: 500; white-space: nowrap; }
.btn.filled { background: #243741; border-color: #243741; }
.btn.muted { border-color: #233642; }
.btn.refresh { width: 80px; margin-left: 84px; color: #1976d2; font: 20px "DejaVu Sans", sans-serif; }
.equal { margin-left: auto; }
.equal .btn { width: 138px; padding: 0 0 2px; }
.search { width: 269px; height: 70px; margin: 10px 0 0 200px; padding: 0 15px 2px; border: 0; border-bottom: 1px solid #b9bbbb; border-radius: 16px; background: #f0f0f0; font: 20px Roboto, sans-serif; }
.search::placeholder { color: #6d6d6d; opacity: 1; }

/* Data grid */
.grid { margin-top: 10px; border: 1px solid #e0e0e0; border-radius: 5px; font-size: 18px; overflow: hidden; }
table { width: 100%; table-layout: fixed; border-collapse: collapse; }
.c-check { width: 62px; }
.c-no { width: 125px; }
.c-odd { width: 187px; }
.c-even { width: 188px; }
.c-wide { width: 225px; }
th, td { padding: 0 0 0 13px; text-align: left; border-bottom: 1px solid #e0e0e0; white-space: nowrap; }
th { height: 69px; padding-left: 0; font-weight: 500; }
th span { display: block; padding-left: 11px; border-left: 2px solid #e0e0e0; line-height: 18px; }
td { height: 50px; }
tr > :first-child { padding-left: 21px; }
tbody tr:last-child td { border-bottom: 0; }
input[type="checkbox"] { appearance: none; display: block; width: 23px; height: 23px; margin: 0; border: 2px solid #111b21; border-radius: 3px; }
.hscroll { display: flex; align-items: center; height: 22px; background: #f1f1f1; border-bottom: 1px solid #e0e0e0; }
.hthumb { flex: 9; height: 17px; background: #c1c1c1; }
.hrest { flex: 7; }
.pager { display: flex; align-items: center; justify-content: flex-end; height: 66px; padding-right: 3px; }
.select-wrap { display: grid; align-items: center; margin: 0 40px 0 11px; }
.select-wrap > * { grid-area: 1 / 1; }
.select-wrap svg { justify-self: end; margin-right: 9px; pointer-events: none; }
select { appearance: none; width: 60px; height: 37px; padding: 0 20px; border: 0; border-radius: 2px; background: #263845; color: #fff; font: 18px Roboto, sans-serif; }
.range { margin-right: 24px; }
.pager button { width: 50px; height: 40px; }
.footer { flex: 1; padding-top: 17px; background: #2d4250; text-align: center; font: 19px/28px "Open Sans", sans-serif; }
.footer a { color: #3b82f6; text-decoration: underline; }

/* Page scrollbar */
.vscroll { width: 21px; display: flex; flex-direction: column; align-items: center; background: #f1f1f1; }
.vtrack { flex: 1; padding-top: 2px; }
.vthumb { width: 17px; height: 55%; background: #c1c1c1; }

/* Taskbar */
.taskbar { display: grid; grid-template-columns: 1fr auto 1fr; align-items: center; height: 60px; padding-bottom: 1px; border-top: 1px solid #e6e6e6; background: #f2f2f2; color: #1b1b1b; }
.weather { display: flex; align-items: center; gap: 10px; padding-left: 27px; }
.dim { color: #6b6b6b; }
.apps { display: flex; gap: 7px; }
.apps button { position: relative; width: 48px; height: 48px; border-radius: 5px; }
.apps .current { background: #fafafa; box-shadow: 0 0 1px 1px #e6e6e6; }
.running::after, .current::after { content: ""; position: absolute; bottom: 0; width: 8px; height: 4px; border-radius: 2px; background: #868686; }
.current::after { width: 20px; background: #0078d4; }
.badge { position: absolute; left: 25px; top: 9px; padding: 0 2px; border-radius: 4px; background: #f03e38; color: #fff; font-size: 10px; line-height: 14px; }
.java { font: 700 7px "Liberation Sans", sans-serif; fill: #f18b1c; }
.tray { display: flex; align-items: center; justify-content: flex-end; gap: 10px; padding-right: 19px; }
.lang { margin: 0 12px 0 10px; }
.clock { margin-left: 10px; text-align: right; }
```
